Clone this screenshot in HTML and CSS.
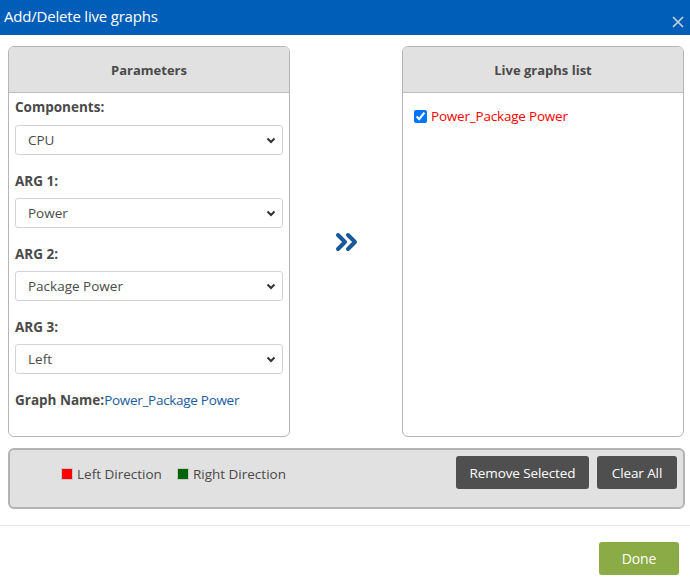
FILE: index.html
```html
<!DOCTYPE html>
<html>
<head>
<meta charset="utf-8">
<link rel="stylesheet" href="styles.css">
</head>
<body>
<div class="dialog">
  <div class="titlebar">
    <span class="title">Add/Delete live graphs</span>
    <svg class="close" width="12" height="12" viewBox="0 0 12 12"><path d="M1 1L11 11M11 1L1 11" stroke="#c9d3df" stroke-width="1.6" fill="none"/></svg>
  </div>
  <div class="body">
    <div class="columns">
      <div class="panel">
        <div class="panel-head">Parameters</div>
        <div class="panel-body">
          <div class="label">Components:</div>
          <div class="select"><span>CPU</span><svg width="10" height="7" viewBox="0 0 10 7"><path d="M1.5 1.5L5 5L8.5 1.5" stroke="#333" stroke-width="2" fill="none"/></svg></div>
          <div class="label">ARG 1:</div>
          <div class="select"><span>Power</span><svg width="10" height="7" viewBox="0 0 10 7"><path d="M1.5 1.5L5 5L8.5 1.5" stroke="#333" stroke-width="2" fill="none"/></svg></div>
          <div class="label">ARG 2:</div>
          <div class="select"><span>Package Power</span><svg width="10" height="7" viewBox="0 0 10 7"><path d="M1.5 1.5L5 5L8.5 1.5" stroke="#333" stroke-width="2" fill="none"/></svg></div>
          <div class="label">ARG 3:</div>
          <div class="select"><span>Left</span><svg width="10" height="7" viewBox="0 0 10 7"><path d="M1.5 1.5L5 5L8.5 1.5" stroke="#333" stroke-width="2" fill="none"/></svg></div>
          <div class="label gname">Graph Name:<span class="gval">Power_Package Power</span></div>
        </div>
      </div>
      <div class="mid">
        <svg width="26" height="20" viewBox="0 0 26 20"><path d="M3 3L10 10L3 17M13 3L20 10L13 17" stroke="#17599a" stroke-width="4" stroke-linecap="round" stroke-linejoin="round" fill="none"/></svg>
      </div>
      <div class="panel">
        <div class="panel-head">Live graphs list</div>
        <div class="panel-body list">
          <label class="item"><input type="checkbox" checked><span>Power_Package Power</span></label>
        </div>
      </div>
    </div>
    <div class="bar">
      <div class="legend">
        <span class="sw red"></span><span class="lt">Left Direction</span>
        <span class="sw green"></span><span class="lt">Right Direction</span>
      </div>
      <div class="btns">
        <button class="btn dark remove">Remove Selected</button>
        <button class="btn dark clear">Clear All</button>
      </div>
    </div>
  </div>
  <div class="footer">
    <button class="btn done">Done</button>
  </div>
</div>
</body>
</html>
```
FILE: styles.css
```css
* { box-sizing: border-box; }
html, body { margin: 0; padding: 0; background: #fff; }
body { font-family: "Open Sans", "Noto Sans", sans-serif; color: #4a4a4a; width: 690px; height: 587px; overflow: hidden; }
.titlebar { height: 35px; background: #005eb8; display: flex; align-items: center; justify-content: space-between; padding: 0 6px 0 4px; }
.title { color: #fff; font-size: 15px; letter-spacing: -0.2px; position: relative; top: -2px; }
.close { margin-top: 8px; }
.body { padding: 11px 5px 0 8px; }
.columns { display: flex; }
.panel { width: 282px; height: 391px; border: 1px solid #b5b5b5; border-radius: 6px; overflow: hidden; }
.panel-head { height: 46px; background: #e1e1e1; border-bottom: 1px solid #bdbdbd; display: flex; align-items: center; justify-content: center; font-weight: 700; font-size: 13px; color: #4a4a4a; }
.panel-body { padding: 4px 6px 0 6px; }
.label { font-size: 13.5px; font-weight: 700; line-height: 20px; margin-bottom: 8px; color: #4a4a4a; }
.select { height: 30px; border: 1px solid #cfd4da; border-radius: 3px; display: flex; align-items: center; justify-content: space-between; padding: 0 6px 0 12px; font-size: 13.5px; color: #4a4a4a; margin-bottom: 16px; }
.select + .label { margin-bottom: 7px; }
.gname .gval { font-weight: 400; color: #1a5a9e; letter-spacing: -0.3px; }
.mid { width: 112px; display: flex; align-items: center; justify-content: center; padding-left: 4px; }
.list { padding: 14px 6px 0 10px; }
.item { display: flex; align-items: center; font-size: 13.5px; color: #ff0000; letter-spacing: -0.2px; }
.item input { margin: 0 4px 0 1px; width: 13px; height: 13px; accent-color: #0075ff; }
.bar { margin-top: 11px; height: 61px; border: 2px solid #b3b3b3; border-radius: 6px; background: #e1e1e1; display: flex; justify-content: space-between; align-items: flex-start; padding: 6px 6px 0 51px; }
.legend { display: flex; align-items: center; height: 22px; margin-top: 7px; font-size: 13.5px; color: #4a4a4a; }
.sw { width: 12px; height: 12px; border: 1px solid #c8c8c8; display: inline-block; margin-right: 4px; }
.sw.red { background: #ff0000; }
.sw.green { background: #006400; margin-left: 15px; }
.btns { display: flex; gap: 8px; }
.btn { font-family: inherit; font-size: 13.5px; border: none; border-radius: 3px; height: 33px; color: #fff; padding: 0; cursor: pointer; letter-spacing: -0.1px; }
.btn.dark { background: #4f4f4f; }
.btn.remove { width: 133px; }
.btn.clear { width: 80px; }
.footer { margin-top: 16px; border-top: 1px solid #e5e5e5; padding: 16px 11px 0 0; display: flex; justify-content: flex-end; }
.btn.done { background: #8bab46; width: 80px; font-size: 14px; }
```
